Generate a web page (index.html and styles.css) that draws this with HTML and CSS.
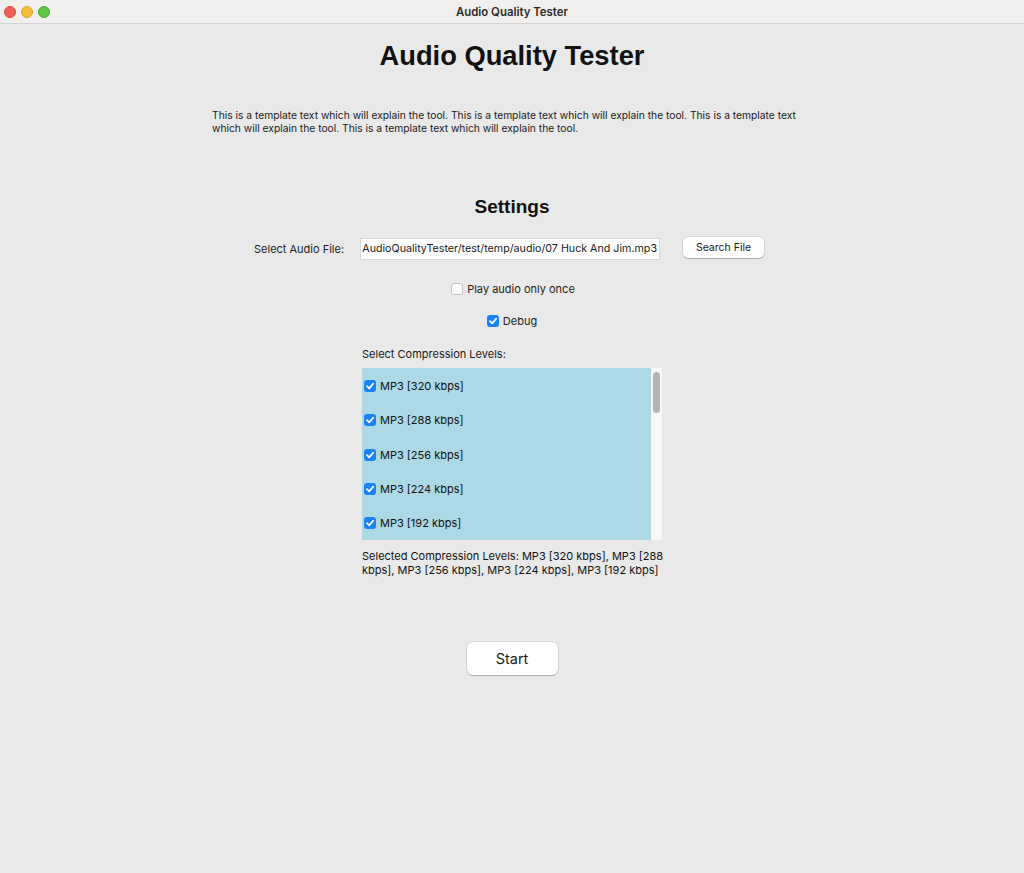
FILE: index.html
```html
<!DOCTYPE html>
<html>
<head>
<meta charset="utf-8">
<link rel="stylesheet" href="styles.css">
</head>
<body>
<div class="titlebar">
  <div class="lights">
    <span class="light red"></span>
    <span class="light yellow"></span>
    <span class="light green"></span>
  </div>
  <div class="wintitle">Audio Quality Tester</div>
</div>
<main class="main">
  <h1 class="title">Audio Quality Tester</h1>
  <p class="desc">This is a template text which will explain the tool. This is a template text which will explain the tool. This is a template text which will explain the tool. This is a template text which will explain the tool.</p>
  <h2 class="settings">Settings</h2>
  <div class="filerow">
    <span class="filelabel">Select Audio File:</span>
    <div class="fileinput"><span class="filetext">AudioQualityTester/test/temp/audio/07 Huck And Jim.mp3</span></div>
    <button class="btn searchbtn">Search File</button>
  </div>
  <label class="check once"><span class="box"></span>Play audio only once</label>
  <label class="check debug"><span class="box on"><svg viewBox="0 0 12 12" width="12" height="12"><path d="M3 6.2 L5.2 8.4 L9.2 3.6" fill="none" stroke="#fff" stroke-width="1.7" stroke-linecap="round" stroke-linejoin="round"/></svg></span>Debug</label>
  <div class="levels">
    <div class="levlabel">Select Compression Levels:</div>
    <div class="listbox">
      <div class="items">
        <div class="item"><span class="box on"><svg viewBox="0 0 12 12" width="12" height="12"><path d="M3 6.2 L5.2 8.4 L9.2 3.6" fill="none" stroke="#fff" stroke-width="1.7" stroke-linecap="round" stroke-linejoin="round"/></svg></span>MP3 [320 kbps]</div>
        <div class="item"><span class="box on"><svg viewBox="0 0 12 12" width="12" height="12"><path d="M3 6.2 L5.2 8.4 L9.2 3.6" fill="none" stroke="#fff" stroke-width="1.7" stroke-linecap="round" stroke-linejoin="round"/></svg></span>MP3 [288 kbps]</div>
        <div class="item"><span class="box on"><svg viewBox="0 0 12 12" width="12" height="12"><path d="M3 6.2 L5.2 8.4 L9.2 3.6" fill="none" stroke="#fff" stroke-width="1.7" stroke-linecap="round" stroke-linejoin="round"/></svg></span>MP3 [256 kbps]</div>
        <div class="item"><span class="box on"><svg viewBox="0 0 12 12" width="12" height="12"><path d="M3 6.2 L5.2 8.4 L9.2 3.6" fill="none" stroke="#fff" stroke-width="1.7" stroke-linecap="round" stroke-linejoin="round"/></svg></span>MP3 [224 kbps]</div>
        <div class="item"><span class="box on"><svg viewBox="0 0 12 12" width="12" height="12"><path d="M3 6.2 L5.2 8.4 L9.2 3.6" fill="none" stroke="#fff" stroke-width="1.7" stroke-linecap="round" stroke-linejoin="round"/></svg></span>MP3 [192 kbps]</div>
      </div>
      <div class="scrolltrack"><div class="thumb"></div></div>
    </div>
    <div class="selected">Selected Compression Levels: MP3 [320 kbps], MP3 [288 kbps], MP3 [256 kbps], MP3 [224 kbps], MP3 [192 kbps]</div>
  </div>
  <button class="btn startbtn">Start</button>
</main>
</body>
</html>
```
FILE: styles.css
```css
html, body {
  margin: 0;
  padding: 0;
}
body {
  width: 1024px;
  height: 873px;
  background: #e9e9e9;
  font-family: "Inter", "Liberation Sans", sans-serif;
  color: #1a1a1a;
  overflow: hidden;
}
.titlebar {
  height: 23px;
  background: #f1f0ef;
  border-bottom: 1px solid #d3d3d3;
  display: flex;
  align-items: center;
}
.lights {
  display: flex;
  gap: 5px;
  padding-left: 4px;
}
.light {
  width: 12px;
  height: 12px;
  border-radius: 50%;
  box-sizing: border-box;
}
.red { background: #ee5f57; border: 1px solid #d9473f; }
.yellow { background: #f5bd3a; border: 1px solid #dca22c; }
.green { background: #5dc840; border: 1px solid #46ad2c; }
.wintitle {
  flex: 1;
  text-align: center;
  font-family: "Inter", "Liberation Sans", sans-serif;
  font-weight: 600;
  font-size: 11.4px;
  color: #2b2b2b;
  margin-right: 50px;
}
.main {
  display: flex;
  flex-direction: column;
  align-items: center;
}
.title {
  margin: 15px 0 0;
  font-family: "Liberation Sans", Arial, sans-serif;
  font-weight: bold;
  font-size: 27.3px;
  line-height: 34px;
  color: #111;
}
.desc {
  width: 600px;
  margin: 36px 0 0;
  font-size: 10.28px;
  line-height: 13px;
  color: #1a1a1a;
}
.settings {
  margin: 60px 0 0;
  font-family: "Liberation Sans", Arial, sans-serif;
  font-weight: bold;
  font-size: 19px;
  line-height: 24px;
  color: #111;
}
.filerow {
  display: flex;
  align-items: center;
  margin-top: 19px;
  font-size: 11px;
  margin-left: -6px;
}
.filelabel {
  width: 106px;
  color: #222;
}
.fileinput {
  width: 300px;
  height: 22px;
  box-sizing: border-box;
  background: #fff;
  border: 1px solid #d8d8d8;
  font-size: 10.7px;
  line-height: 20px;
  white-space: nowrap;
  overflow: hidden;
  display: flex;
  justify-content: flex-end;
  padding-right: 2px;
  color: #1a1a1a;
}
.filetext {
  flex: none;
}
.btn {
  background: #fff;
  border: none;
  border-radius: 5px;
  box-shadow: 0 0 0 0.5px rgba(0,0,0,0.15), 0 1px 1px rgba(0,0,0,0.2);
  font-family: "Inter", "Liberation Sans", sans-serif;
  color: #1a1a1a;
  padding: 0;
}
.searchbtn {
  width: 81px;
  height: 21px;
  margin-left: 23px;
  margin-top: -4px;
  font-size: 10.5px;
}
.check {
  display: flex;
  align-items: center;
  gap: 4px;
  font-size: 11px;
  color: #222;
}
.once {
  margin-top: 22px;
  margin-left: 2px;
}
.debug {
  margin-top: 18px;
  margin-bottom: 1px;
}
.box {
  width: 12px;
  height: 12px;
  box-sizing: border-box;
  border-radius: 3px;
  background: #fff;
  border: 1px solid #c4c4c4;
  display: inline-flex;
}
.box.on {
  background: #1a82fb;
  border: none;
}
.levels {
  width: 300px;
  margin-top: 19px;
}
.levlabel {
  font-size: 11px;
  line-height: 13px;
  color: #1a1a1a;
}
.listbox {
  margin-top: 7px;
  height: 172px;
  display: flex;
  background: #f8f8f8;
}
.items {
  flex: 1;
  background: #add8e6;
  padding-top: 12px;
}
.item {
  height: 34.3px;
  display: flex;
  align-items: flex-start;
  gap: 4px;
  padding-left: 2px;
  font-size: 11px;
  line-height: 13px;
  color: #111;
}
.scrolltrack {
  width: 11px;
  padding: 4px 2px 0 2px;
  box-sizing: border-box;
}
.thumb {
  width: 7px;
  height: 41px;
  border-radius: 4px;
  background: #b5b5b5;
}
.selected {
  width: 310px;
  margin-top: 9px;
  font-size: 11px;
  line-height: 14px;
  color: #111;
}
.startbtn {
  margin-top: 65px;
  width: 91px;
  height: 33px;
  font-size: 14.5px;
  border-radius: 6px;
}
```
